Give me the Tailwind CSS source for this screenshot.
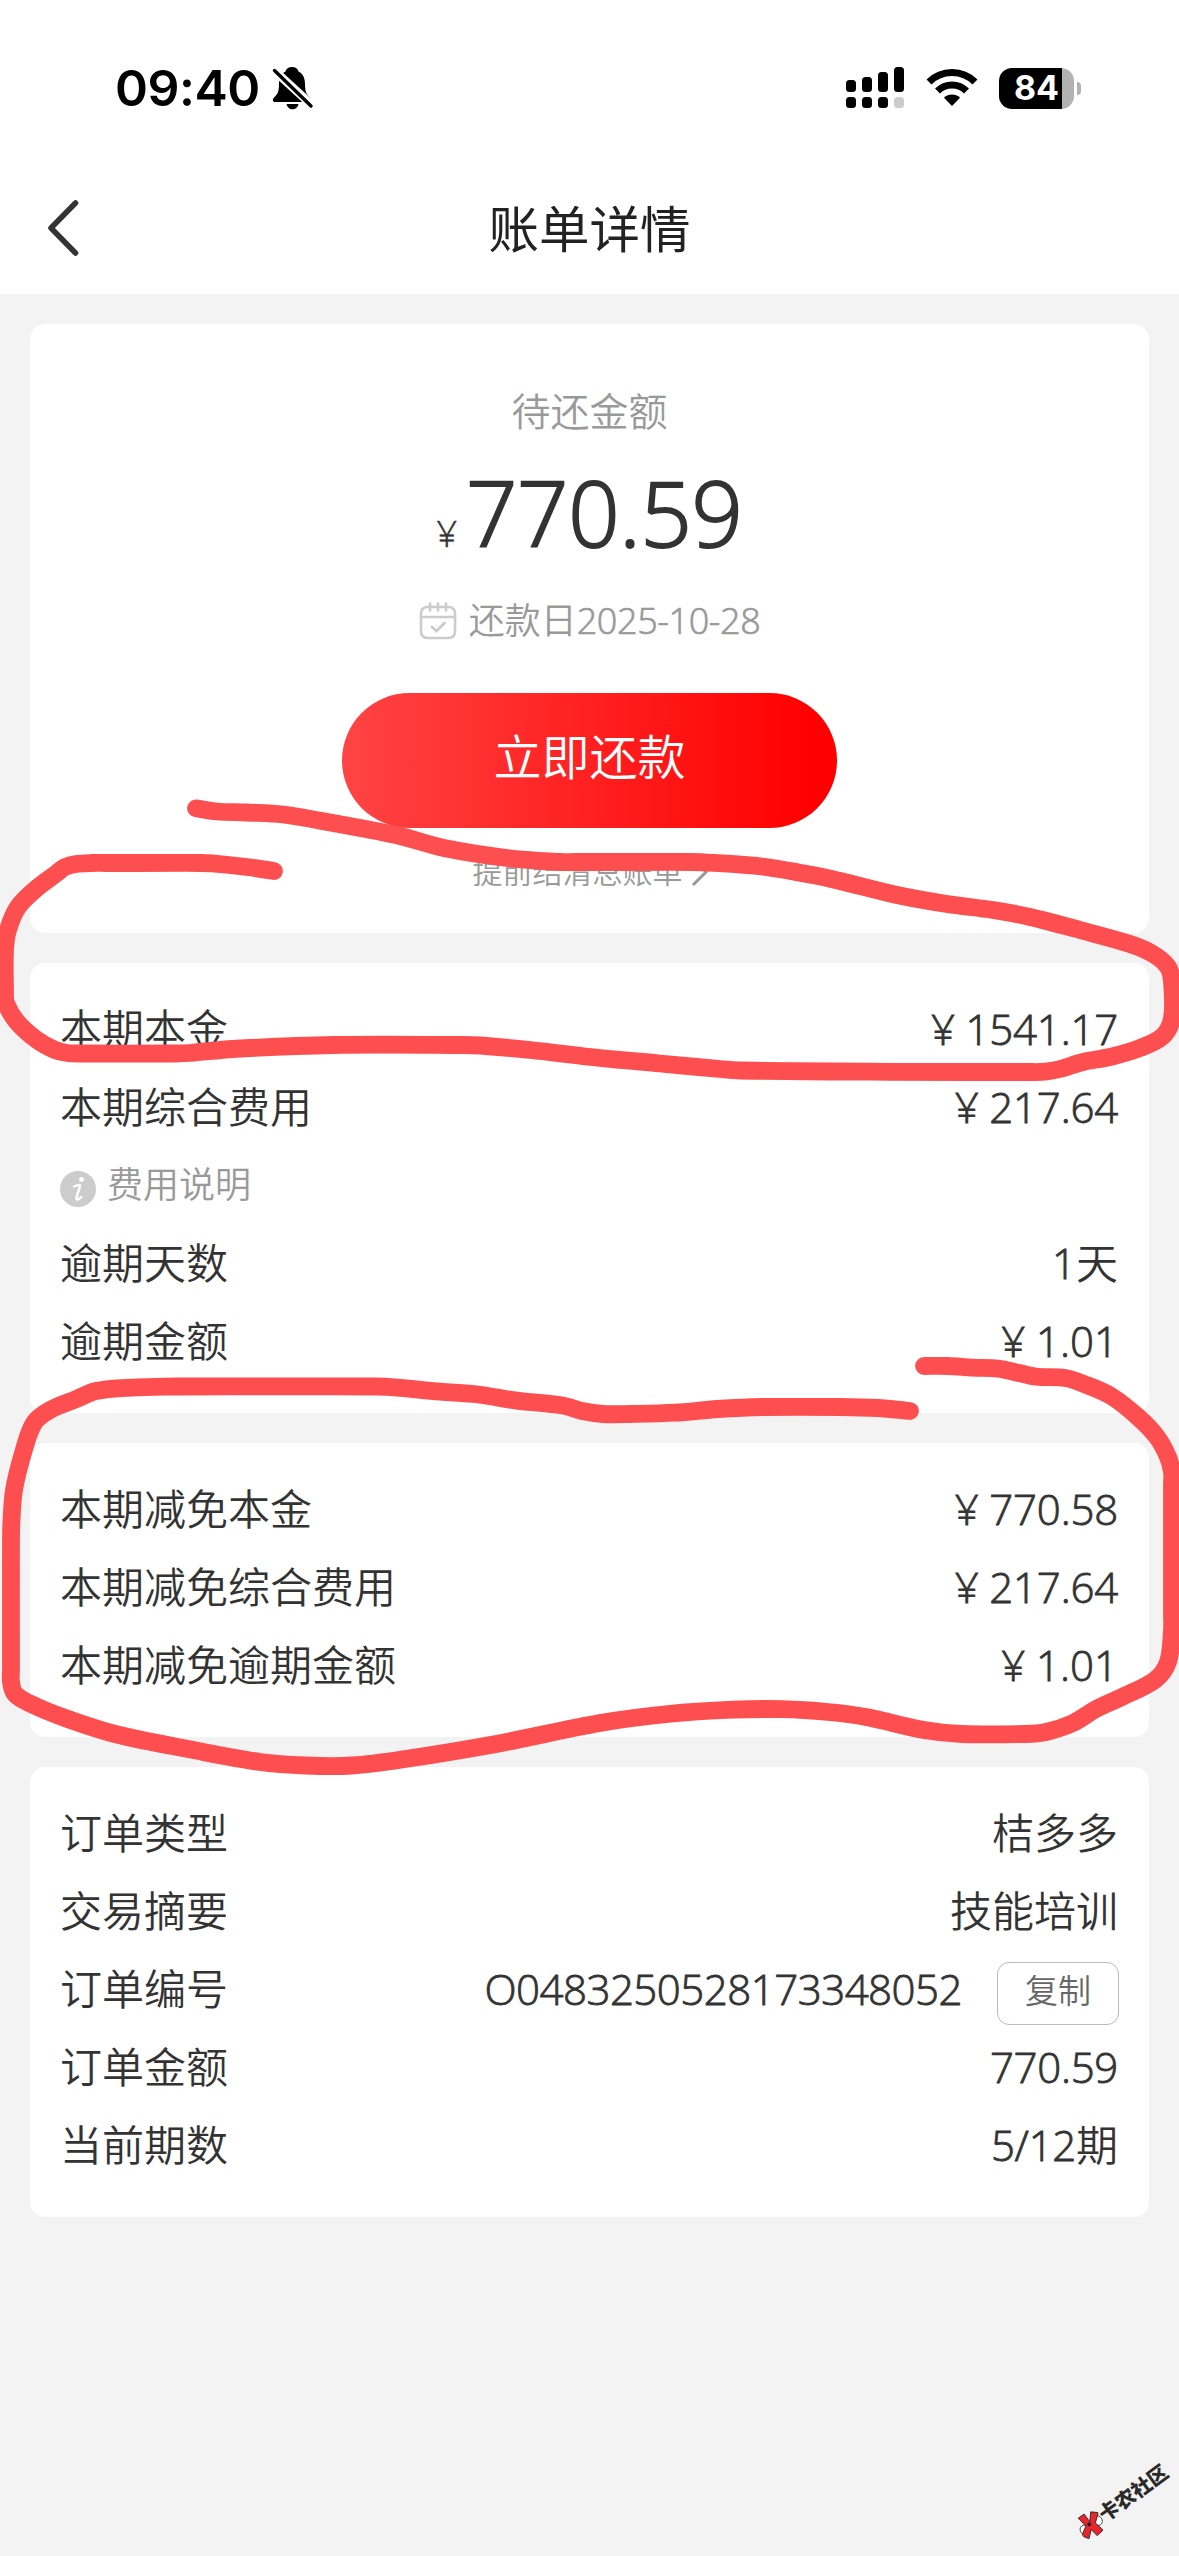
<!DOCTYPE html>
<html lang="zh-CN">
<head>
<meta charset="utf-8">
<title>账单详情</title>
<script src="https://cdn.jsdelivr.net/npm/@tailwindcss/browser@4"></script>
</head>
<body class="bg-[#f3f3f3] font-['Open_Sans','Noto_Sans_CJK_SC',sans-serif] font-[350] text-[#333]">
<div class="relative flex h-[2556px] w-[1179px] flex-col overflow-hidden">

  <!-- status bar + nav -->
  <header class="h-[294px] bg-white">
    <div class="flex h-[164px] items-center pt-3">
      <span class="ml-[115px] w-[145px] font-['Inter',sans-serif] text-[50px] leading-none font-semibold tracking-[-0.5px] text-black">09:40</span>
      <svg class="ml-[12px] h-[44px] w-[42px]" viewBox="272 66 42 44">
        <path fill="#000" d="M292 67c-3.600 0-6 2-6.500 4.500C280.500 74 279 79 279 84c0 8-1.500 10-4.500 13-3 3.500-1.500 5 1 5h33c2.500 0 4-1.500 1-5-3-3-4.500-5-4.500-13 0-5-1.500-10-6.500-12.500C298 69 295.600 67 292 67z"/>
        <path fill="#000" d="M286.500 104h12c-.5 3-3 5.300-6 5.300s-5.500-2.300-6-5.300z"/>
        <path stroke="#fff" stroke-width="8.500" d="M272 68.500l42 38.500"/>
        <path stroke="#000" stroke-width="3.400" stroke-linecap="round" d="M274.500 70.500l36.500 35.500"/>
      </svg>
      <svg class="ml-[530px] h-[44px] w-[60px]" viewBox="844 66 60 44">
        <g fill="#000">
          <rect x="846" y="80" width="10" height="12" rx="3.500"/><rect x="862" y="77" width="10" height="15" rx="3.500"/>
          <rect x="878" y="72" width="10" height="20" rx="3.500"/><rect x="894" y="67" width="10" height="25" rx="3.500"/>
          <rect x="846" y="97" width="10" height="11" rx="3.500"/><rect x="862" y="97" width="10" height="11" rx="3.500"/>
          <rect x="878" y="97" width="10" height="11" rx="3.500"/>
        </g>
        <rect x="894" y="97" width="10" height="11" rx="3.500" fill="#ccc"/>
      </svg>
      <svg class="ml-[22px] h-[44px] w-[52px]" viewBox="926 66 52 44">
        <g fill="none" stroke="#000" stroke-width="7">
          <path d="M929 82a32.500 32.500 0 0 1 46 0"/>
          <path d="M937.500 91a20.500 20.500 0 0 1 29 0"/>
        </g>
        <path fill="#000" d="M952 106l-8-8.200a11.500 11.500 0 0 1 16 0z"/>
      </svg>
      <div class="ml-[21px] flex h-[41px] w-[75px] items-center justify-center rounded-[13px] bg-linear-to-r from-black from-84% to-[#b2b2b2] to-84%">
        <span class="pb-px font-['Inter',sans-serif] text-[34px] leading-none font-bold text-white">84</span>
      </div>
      <div class="ml-[3px] h-[13px] w-[4px] rounded-r-full bg-[#b2b2b2]"></div>
    </div>
    <div class="relative flex h-[130px] items-center justify-center">
      <svg class="absolute top-[34px] left-[44px] h-[60px] w-[36px]" viewBox="44 200 36 60"><path d="M75.500 205L51 230l24.500 25" fill="none" stroke="#333" stroke-width="5.500" stroke-linecap="round" stroke-linejoin="round"/></svg>
      <h1 class="text-[50.500px] leading-none font-normal text-[#222]">账单详情</h1>
    </div>
  </header>

  <main class="flex flex-col gap-[30px] px-[30px] pt-[30px]">
    <section class="flex h-[609px] flex-col items-center rounded-[15px] bg-white">
      <p class="mt-[63px] text-[39px] leading-[48px] text-[#999]">待还金额</p>
      <div class="mt-[23px] flex h-[108px] items-baseline leading-[108px]">
        <span class="mr-[9px] text-[36px] [-webkit-text-stroke:0.5px_currentColor]">¥</span>
        <span class="text-[90px] tracking-[-0.3px] [-webkit-text-stroke:2px_currentColor]">770.59</span>
      </div>
      <div class="mt-[25px] flex h-[60px] items-center text-[#999]">
        <svg class="mr-[12px] h-[38px] w-[38px]" viewBox="0 0 38 38" fill="none" stroke="#ccc" stroke-width="2.600" stroke-linecap="round">
          <rect x="2" y="5" width="34" height="31" rx="6"/><path d="M2 15h34M11 1.500v7M19 1.500v7M27 1.500v7"/><path stroke-width="3" d="M13 25l4.500 4 8-8"/>
        </svg>
        <span class="text-[36px] leading-none">还款日<span class="tracking-[-0.4px] [-webkit-text-stroke:0.7px_currentColor]">2025-10-28</span></span>
      </div>
      <div class="mt-[42px] flex h-[135px] w-[495px] shrink-0 items-center justify-center rounded-full bg-linear-to-r/srgb from-[#ff4444] to-[#ff0000] to-95% pb-[7px] text-[48px] leading-none text-white">立即还款</div>
      <div class="mt-[26px] flex h-[36px] items-center pl-[2px] text-[30px] leading-none text-[#999]">
        <span>提前结清总账单</span>
        <svg class="ml-[8px] h-[30px] w-[18px]" viewBox="0 0 18 30"><path d="M2 2l13 13L2 28" fill="none" stroke="#999" stroke-width="3"/></svg>
      </div>
    </section>

    <section class="rounded-[15px] bg-white px-[30px] pt-[27px] pb-[33px] text-[42px] leading-[78px]">
      <div class="flex h-[78px] justify-between"><span>本期本金</span><span class="pr-px tracking-[-0.2px] [-webkit-text-stroke:0.8px_currentColor]">¥ 1541.17</span></div>
      <div class="flex h-[78px] justify-between"><span>本期综合费用</span><span class="pr-px tracking-[-0.2px] [-webkit-text-stroke:0.8px_currentColor]">¥ 217.64</span></div>
      <div class="flex h-[78px] items-center text-[36px] text-[#999]">
        <svg class="mt-[7px] mr-[11px] h-[36px] w-[36px]" viewBox="0 0 36 36"><circle cx="18" cy="18" r="18" fill="#ccc"/><circle cx="21.500" cy="8.500" r="2.400" fill="#fff"/><path d="M14 15.500c3-1.500 5.500-2 6-1.200.6 1-3.800 10.500-3.500 13.200.2 1.800 2.500.8 5-1.500" fill="none" stroke="#fff" stroke-width="2.400" stroke-linecap="round"/></svg>
        <span>费用说明</span>
      </div>
      <div class="flex h-[78px] justify-between"><span>逾期天数</span><span class="pr-px"><span class="[-webkit-text-stroke:0.8px_currentColor]">1</span>天</span></div>
      <div class="flex h-[78px] justify-between"><span>逾期金额</span><span class="pr-px [-webkit-text-stroke:0.8px_currentColor]">¥ 1.01</span></div>
    </section>

    <section class="rounded-[15px] bg-white px-[30px] pt-[27px] pb-[33px] text-[42px] leading-[78px]">
      <div class="flex h-[78px] justify-between"><span>本期减免本金</span><span class="pr-px tracking-[-0.2px] [-webkit-text-stroke:0.8px_currentColor]">¥ 770.58</span></div>
      <div class="flex h-[78px] justify-between"><span>本期减免综合费用</span><span class="pr-px tracking-[-0.2px] [-webkit-text-stroke:0.8px_currentColor]">¥ 217.64</span></div>
      <div class="flex h-[78px] justify-between"><span>本期减免逾期金额</span><span class="pr-px [-webkit-text-stroke:0.8px_currentColor]">¥ 1.01</span></div>
    </section>

    <section class="rounded-[15px] bg-white px-[30px] pt-[27px] pb-[33px] text-[42px] leading-[78px]">
      <div class="flex h-[78px] justify-between"><span>订单类型</span><span class="pr-px">桔多多</span></div>
      <div class="flex h-[78px] justify-between"><span>交易摘要</span><span class="pr-px">技能培训</span></div>
      <div class="flex h-[78px] items-center justify-between">
        <span>订单编号</span>
        <span class="flex items-center">
          <span class="tracking-[-0.5px] [-webkit-text-stroke:0.8px_currentColor]">O0483250528173348052</span>
          <span class="mt-2 ml-[35px] flex h-[63px] w-[122px] items-center justify-center rounded-[12px] border-[1.500px] border-[#bbb] pb-[5px] text-[33px] leading-none text-[#666]">复制</span>
        </span>
      </div>
      <div class="flex h-[78px] justify-between"><span>订单金额</span><span class="pr-px tracking-[-0.3px] [-webkit-text-stroke:0.8px_currentColor]">770.59</span></div>
      <div class="flex h-[78px] justify-between"><span>当前期数</span><span class="pr-px"><span class="tracking-[-0.3px] [-webkit-text-stroke:0.8px_currentColor]">5/12</span>期</span></div>
    </section>
  </main>

  <!-- hand-drawn marks -->
  <svg class="absolute inset-0 h-[2556px] w-[1179px]" viewBox="0 0 1179 2556" fill="none" stroke="#fe4f50" stroke-width="17.800" stroke-linecap="round" stroke-linejoin="round">
    <path id="mark1"/>
    <path id="mark2"/>
  </svg>

  <!-- community watermark -->
  <div class="absolute top-[2488px] left-[1070px] flex w-[106px] origin-center rotate-[-36deg] items-center">
    <svg class="h-[26px] w-[26px] shrink-0" viewBox="0 0 26 26">
      <ellipse cx="5" cy="14" rx="4.500" ry="5" fill="#fff" stroke="#333" stroke-width=".8"/><ellipse cx="21" cy="14" rx="4.500" ry="5" fill="#fff" stroke="#333" stroke-width=".8"/>
      <g transform="rotate(18 13 13)" fill="#e8252b" stroke="#222" stroke-width=".8"><path d="M3 3l7-2 3 9 4-9 7 3-6 9 5 9-7 4-4-8-5 8-6-5 7-8z"/></g>
      <circle cx="12" cy="12" r="2" fill="#222"/>
    </svg>
    <span class="text-[20px] leading-none font-black whitespace-nowrap text-[#2a2a2a]">卡农社区</span>
  </div>
</div>

<script>
  // smooth curve through the sampled points
  function smooth(p) {
    let d = `M${p[0]}`;
    for (let i = 0; i < p.length - 1; i++) {
      const a = p[i - 1] || p[i], b = p[i], c = p[i + 1], e = p[i + 2] || c;
      const l = Math.hypot(c[0] - b[0], c[1] - b[1]);
      const t = (u, v) => { const n = Math.hypot(v[0] - u[0], v[1] - u[1]) || 1; return [(v[0] - u[0]) / n * l / 3, (v[1] - u[1]) / n * l / 3]; };
      const m = t(a, c), n = t(b, e);
      d += `C${b[0] + m[0]} ${b[1] + m[1]} ${c[0] - n[0]} ${c[1] - n[1]} ${c[0]} ${c[1]}`;
    }
    return d;
  }
  document.getElementById('mark1').setAttribute('d', smooth([[196,808.3],[217,811.500],[247,812.500],[283,814.500],[333,823],[400,836],[444,848],[507,858],[559,862],[575,862],[690,862],[704,862.300],[762,866.500],[818,876],[840,881],[897,895],[947,904],[993,910],[1030,917],[1080,930],[1130,944],[1153,954],[1168,967],[1172,982],[1172,1018],[1163,1036],[1140,1048],[1110,1057],[1083,1062],[1060,1069],[1045,1071.700],[1030,1072],[870,1071.700],[740,1070.500],[720,1069],[660,1063.500],[600,1058],[530,1050],[480,1045.500],[463,1045],[333,1045],[233,1049],[190,1053],[175,1053.500],[82,1053.500],[67,1053],[55,1050],[37,1040],[17,1022],[6,1003],[5,990],[5,950],[8,930],[18,907],[37,888],[57,873],[65,867],[76,864],[92,863],[105,863],[200,863],[212,863.300],[247,867],[274,871]]));
  document.getElementById('mark2').setAttribute('d', smooth([[924,1366],[947,1366],[973,1367.700],[998,1368.700],[1019,1373],[1036,1376.700],[1065,1378],[1084,1384],[1111,1396],[1138,1417],[1157,1437],[1168,1457],[1172,1472],[1172,1485],[1172,1615],[1172,1630],[1168,1662],[1155,1680],[1122,1697],[1096,1709],[1073,1723],[1046,1732],[1025,1734],[962,1734],[924,1730],[866,1717],[828,1712],[782,1709.200],[733,1709.700],[668,1714],[600,1723],[497.500,1743.700],[402,1759.500],[352,1765.500],[306,1765.500],[260,1762],[191,1749.600],[115,1734],[65,1718],[31,1704],[15,1694],[11,1682],[11,1670],[11,1540],[11.500,1520],[14,1490],[23,1453],[34,1423],[50,1410],[76.500,1399],[96,1391],[126,1387.800],[165,1386.600],[180,1386.500],[370,1386.500],[388,1386.800],[440,1391.600],[478,1394.500],[517,1400.700],[562.600,1405.500],[582,1411],[603,1414],[630,1414],[675,1412.700],[717.500,1409],[763,1407],[840,1407],[878,1408],[910,1411]]));
</script>
</body>
</html>
